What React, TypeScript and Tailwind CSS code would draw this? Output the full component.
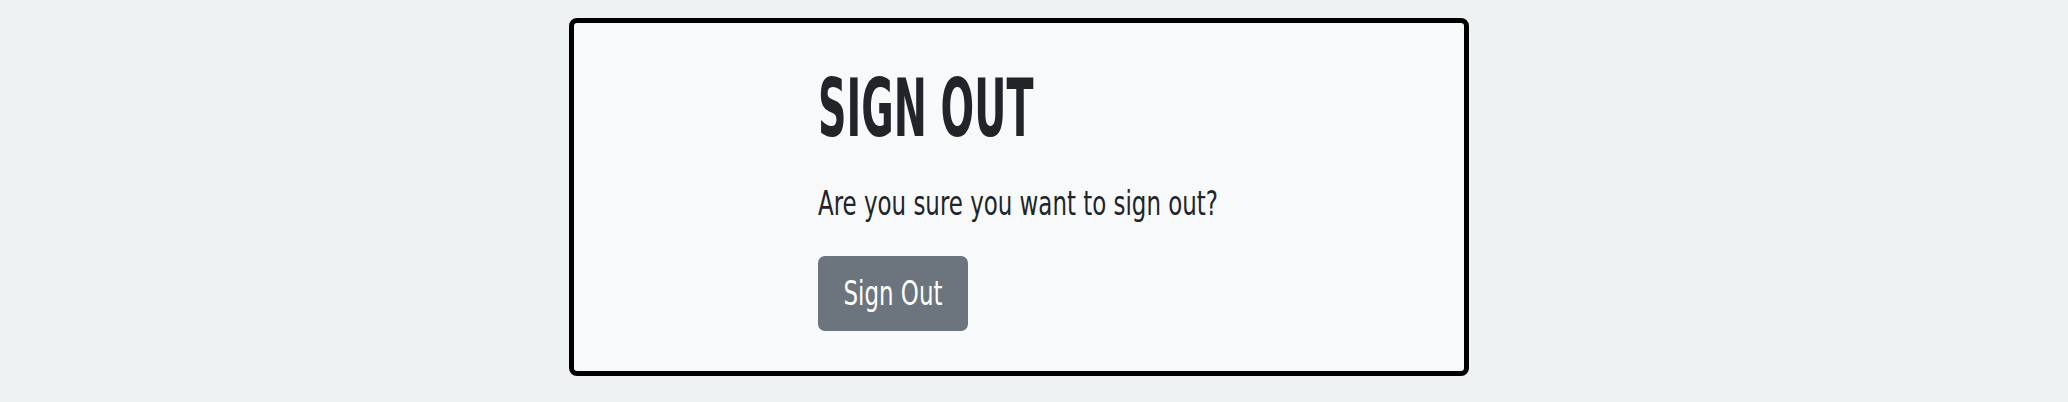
export default function App() {
  return (
    <div className="min-h-[402px] w-full bg-[#eef2f3] pt-[18px] pr-[30px] flex justify-center items-start font-['Liberation_Sans_Narrow','DejaVu_Sans_Condensed',sans-serif]">
      <section className="w-[900px] h-[358px] rounded-[8px] border-[5px] border-black bg-[#f8f9fa] pl-[244px] pt-[46px]">
        <h1 className="m-0 text-[80px] leading-[80px] font-bold text-[#212529]">
          <span className="inline-block origin-left scale-x-[0.55]">SIGN OUT</span>
        </h1>
        <p className="mt-[34px] text-[34px] leading-[40px] text-[#212529]">
          <span className="inline-block origin-left scale-x-[0.75]">Are you sure you want to sign out?</span>
        </p>
        <button className="mt-[33px] w-[150px] h-[75px] rounded-[7px] bg-[#6c757d] text-white text-[34px] flex items-center justify-center">
          <span className="inline-block scale-x-[0.75]">Sign Out</span>
        </button>
      </section>
    </div>
  );
}
